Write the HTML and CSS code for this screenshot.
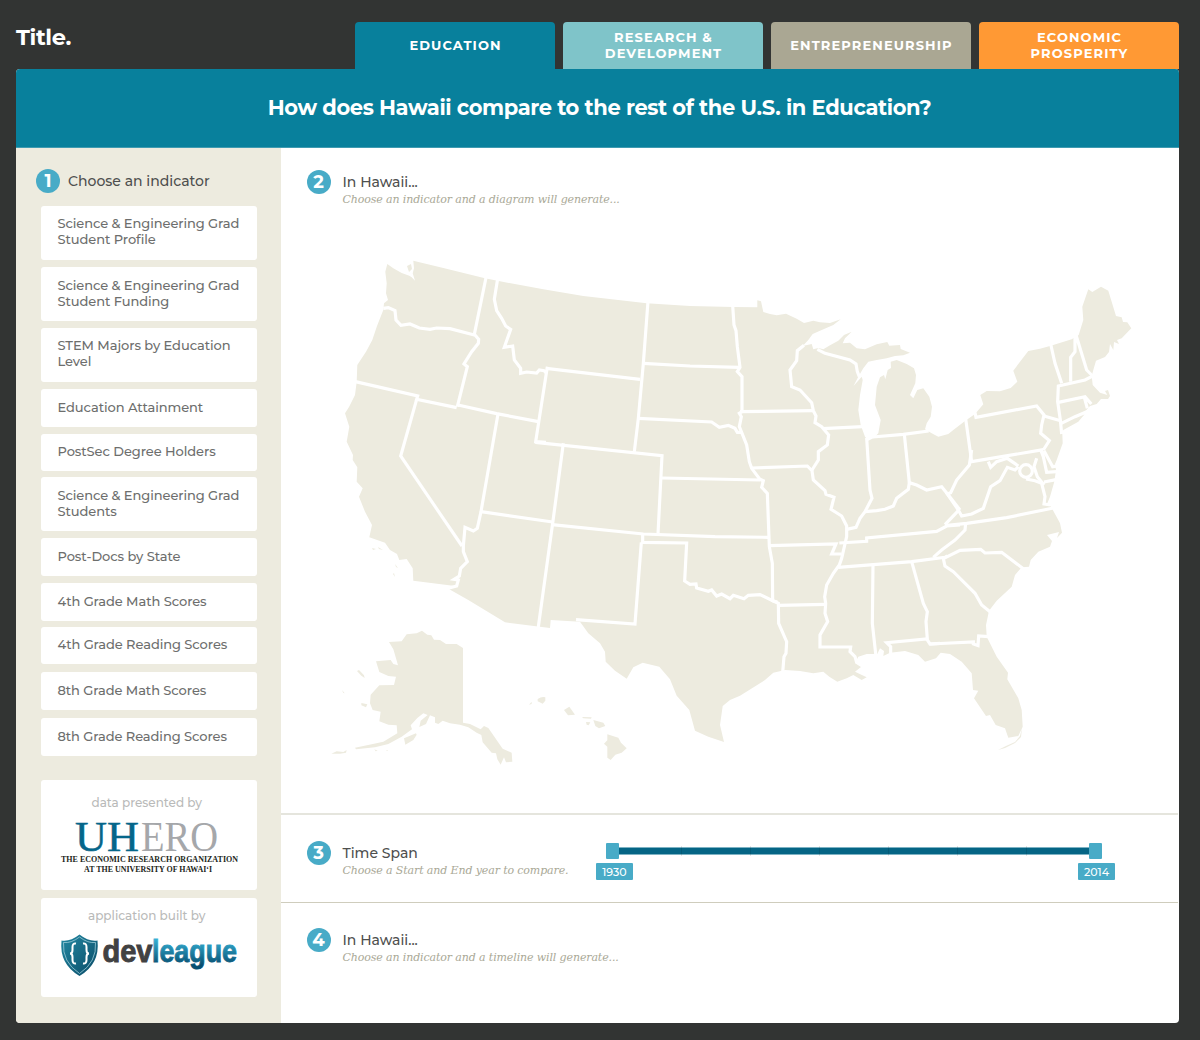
FILE: index.html
```html
<!DOCTYPE html>
<html lang="en">
<head>
<meta charset="utf-8">
<title>Title.</title>
<link rel="stylesheet" href="styles.css">
</head>
<body>
<header class="top">
  <h1 class="brand">Title.</h1>
  <nav class="tabs">
    <a class="tab tab-education">EDUCATION</a>
    <a class="tab tab-research">RESEARCH &amp;<br>DEVELOPMENT</a>
    <a class="tab tab-entre">ENTREPRENEURSHIP</a>
    <a class="tab tab-economic">ECONOMIC<br>PROSPERITY</a>
  </nav>
</header>
<main class="panel">
  <div class="question"><h2 class="question-text">How does Hawaii compare to the rest of the U.S. in Education?</h2></div>
  <div class="columns">
    <aside class="sidebar">
      <div class="step step-side"><span class="num">1</span><h3 class="step-title">Choose an indicator</h3></div>
      <ul class="indicators">
        <li class="item tall">Science &amp; Engineering Grad<br>Student Profile</li>
        <li class="item tall low">Science &amp; Engineering Grad<br>Student Funding</li>
        <li class="item tall">STEM Majors by Education<br>Level</li>
        <li class="item">Education Attainment</li>
        <li class="item short near">PostSec Degree Holders</li>
        <li class="item tall low">Science &amp; Engineering Grad<br>Students</li>
        <li class="item">Post-Docs by State</li>
        <li class="item near">4th Grade Math Scores</li>
        <li class="item short far">4th Grade Reading Scores</li>
        <li class="item far">8th Grade Math Scores</li>
        <li class="item">8th Grade Reading Scores</li>
      </ul>
      <section class="credit credit-data">
        <p class="credit-label">data presented by</p>
        <svg class="uhero" viewBox="0 0 216 64" width="216" height="64" role="img" aria-label="UHERO">
          <text class="uh" x="34" y="38.500" textLength="64" lengthAdjust="spacingAndGlyphs">UH</text>
          <text class="ero" x="100" y="38.500" textLength="77" lengthAdjust="spacingAndGlyphs">ERO</text>
          <text class="org" x="20" y="50" textLength="177" lengthAdjust="spacingAndGlyphs">THE ECONOMIC RESEARCH ORGANIZATION</text>
          <text class="org" x="43" y="60" textLength="128" lengthAdjust="spacingAndGlyphs">AT THE UNIVERSITY OF HAWAI‘I</text>
        </svg>
      </section>
      <section class="credit credit-app">
        <p class="credit-label">application built by</p>
        <svg class="devleague" viewBox="0 0 216 46" width="216" height="46" role="img" aria-label="devleague">
          <defs>
            <linearGradient id="blue" x1="0" y1="0" x2="0" y2="1"><stop offset="0.15" stop-color="#35b0d4"/><stop offset="0.9" stop-color="#064e70"/></linearGradient>
            <linearGradient id="shield" x1="0" y1="0" x2="1" y2="1"><stop offset="0" stop-color="#2389a3"/><stop offset="1" stop-color="#0a4a66"/></linearGradient>
          </defs>
          <path d="M38.500 1.500 Q48 9 56.500 7.500 Q59 31 38.500 43 Q18 31 20.500 7.500 Q29 9 38.500 1.500Z" fill="url(#shield)"/>
          <path d="M38.500 4 Q47 10.500 54.500 9.500 Q56 29 38.500 40.500 Q21 29 22.500 9.500 Q30 10.500 38.500 4Z" fill="none" stroke="#9ccbd8" stroke-width="0.8"/>
          <path d="M35 10.500 Q31.500 10 31.500 14 V17 Q31.500 20.500 29 20.500 Q31.500 20.500 31.500 24 V27 Q31.500 31 35 30.500 M42 10.500 Q45.500 10 45.500 14 V17 Q45.500 20.500 48 20.500 Q45.500 20.500 45.500 24 V27 Q45.500 31 42 30.500" fill="none" stroke="#fff" stroke-width="2"/>
          <text class="dev" x="61.500" y="29" textLength="50" lengthAdjust="spacingAndGlyphs">dev</text>
          <text class="league" x="111" y="29" textLength="85" lengthAdjust="spacingAndGlyphs">league</text>
        </svg>
      </section>
    </aside>
    <div class="content">
      <section class="map-section">
        <div class="step"><span class="num">2</span><div><h3 class="step-title hawaii">In Hawaii...</h3><p class="hint">Choose an indicator and a diagram will generate...</p></div></div>
        <svg class="map" viewBox="320 240 830 540" width="830" height="540" role="img" aria-label="Map of the United States">
          <path class="land" d="M387.300 264L393.300 268.300 401.700 273 409.300 275.700 411.700 277.300 415 280.700 412.700 273.300 414 268.300 413.300 260.700 443.300 268 485 278.300 500 281.300 543.300 289.300 583.300 296 646.700 303.300 690 306 733.300 307 757.300 307.300 757.300 300.300 761 301.300 763.300 312 770 314 776.700 315.300 786 313.700 796.700 318.700 804 323 813.300 320.700 820 322.300 830 323 840.700 319.300 833.300 325 820 330.700 812.700 334 808.300 340 802.700 346 811.700 344 813.300 349.300 818.300 348 823.300 349.300 830 345.300 838.300 340.700 844 335 851.700 331.700 845 338.300 842.700 343.300 850 342.700 856.700 348.300 865 349.300 876.700 344.300 887.300 342 889.300 345.700 900 345 900.700 349 910 352.700 903.300 355.300 895 356 886.700 358.300 876.700 360 868.300 361.700 863.300 368.300 858.300 376.700 853.500 386 861.700 376.700 862.700 380 860 395 858.300 410 860.700 425 865 436.700 868.300 440.700 873.300 438.300 878.300 433.300 880.700 420 875 405 876.700 386.700 880 377.300 884 375 885.300 379.300 887.700 370 891 368 890.700 361.700 896.700 360 906.700 364 914 368.300 916 375 915.300 383.300 910 395 913.300 398.300 917.300 390 923.300 388.300 929.300 396.700 932 406.700 930.700 416.700 926.700 423.300 925 429.300 931.700 433.300 938.300 436.700 948.300 434 953.300 430 965 421 975 414 983.300 404.300 980.300 395 986.700 391 1000 391.300 1010.700 388 1017.300 381.700 1013.300 370.700 1020 361.700 1028.300 351 1040 348.700 1050 346 1071.700 339.300 1078.700 335 1083.300 320 1082.300 306.700 1088.300 289.300 1092.300 292 1101 286.700 1108.300 290.700 1116 316 1121.700 317.300 1123 322 1127.300 322.300 1131.300 328.300 1121.700 338.300 1117 340 1119 344 1114 342 1113.300 350 1110 344 1109 352 1105 357 1096 360.700 1093.300 370 1091.700 376 1092.700 385 1100 392.700 1107.300 395 1105 391 1108 390 1110 396 1108 399 1101 399 1096.700 404 1090 406 1085.500 411 1084 415 1078.300 421.700 1063.300 430 1062.300 433.300 1062.700 443.300 1056.700 460 1055 464 1056 470 1054.300 481.700 1050 496.700 1047.300 503.300 1051 506.700 1058.300 520 1060 523.300 1062 532.700 1057 538 1059 532 1051 534 1047 535 1052 541 1050 546.700 1038.300 551.700 1030.700 560 1029 566.700 1021.700 567.300 1015 575 1011.700 586.700 996.700 600.700 989 610.700 986 625 986.700 636.700 996.700 656.700 1008 672.700 1007.300 679.300 1018.300 698.300 1021.700 710 1022.700 726.700 1018.300 736 1008.300 737.700 1005 728.300 995.700 725 990 715 986 716 974 698.300 978.300 690.700 973 690 971.700 673.300 961.700 661.700 950 654 940.700 652.700 936 658.300 925 661.700 918.300 655 905 651 890 652.700 883.300 656 884 651 880 648.300 877.300 654 866.700 654 858.300 656.700 855 663.300 861 667 855 671.700 866.700 677.300 861.700 680 853.300 675 846.700 678.300 837.300 681.700 829.300 676.700 823.300 671.700 813.300 673.300 800 671 785 670 773.300 672.700 765 680 740 695.700 730 700 722.700 706 720 725 724 742 708.300 736.700 695 730.700 689.300 710 676.700 695.700 670 679.300 659.300 666.700 642.700 662.700 633.300 667.300 626.700 678.700 615 670.700 605.700 661.700 605 651.700 600 643.300 588.300 633.300 580 621.700 550.700 620 550 628 505 622.300 468.300 600 449.300 589.300 455 586 413.300 580.700 412.700 568.300 406.700 559 399.300 560 397 554 390 550 385 542.700 369.300 537.300 372 525 365 511.700 359 496.700 362.700 488.300 356.700 481.700 357.300 467.300 352.700 460 353 455 346.700 441.700 349.300 426.700 345 413.300 349 407 355 395 356.700 381.700 357.300 365 366 351.700 372.300 340 377 326 383.300 310 384 303.300 388 300 386 293.300 386.700 283.300 385.300 271.700Z"/>
          <path class="land" d="M407 266l4-2 1 5-3 3zM372 548l4 1-3 1zM378 547l5 3-4-1zM395 564l3 4-2-1zM394 573l1 4-2-3zM998 750l8-4 9-4 5-6 2-8-1 9-6 6-10 5z"/>
          <g class="border" transform="translate(330 240) scale(.33333)">
            <path d="M160 205L175 203 195 212 198 240 213 256 240 252 268 264 300 268 320 264 360 266 433 285"/>
            <path d="M469 108L433 283 446 298 445 310 425 335 402 372 412 380 382 500"/>
            <path d="M76 425L263 468 260 478 380 503"/>
            <path d="M384 495L500 521 625 545"/>
            <path d="M260 478L212 648 396 918"/>
            <path d="M504 522L453 815 442 865 430 873 405 862 400 918 400 935 412 965 392 985 388 1008 372 1018 385 1020 380 1038 355 1045"/>
            <path d="M453 815L668 846"/>
            <path d="M503 116L493 178 500 212 515 235 527 258 542 268 523 322 548 318 553 360 572 385 572 400 590 396 620 399 628 390 642 392 650 400"/>
            <path d="M652 380L617 605 648 607"/>
            <path d="M700 610L668 850 624 1168"/>
          </g>
          <g class="border" transform="translate(530 280) scale(.33333)">
            <path d="M48 265L330 298"/>
            <path d="M354 64L340 250 325 415 313 515"/>
            <path d="M16 487L396 527 384 762"/>
            <path d="M396 594L690 600"/>
            <path d="M340 250L480 258 628 262"/>
            <path d="M325 415L545 426 568 442 595 436 615 445 622 457 636 457"/>
            <path d="M66 734L340 762 555 770 716 772"/>
            <path d="M338 762L338 787 470 789 464 903 480 913 498 912 500 924 535 934 545 930 560 948 575 942 600 956 610 946 642 956 655 946 690 944 728 962 742 966"/>
            <path d="M334 787L315 1032 138 1019"/>
            <path d="M608 76L612 135 618 152 622 200 630 262 622 275 636 290 636 395 628 400 634 410 628 440 650 495 658 545 665 565 690 598 700 602 695 622 712 640 718 800 727 850 728 962 745 970 746 1030 770 1085 768 1120 762 1130 758 1178"/>
          </g>
          <g class="border" transform="translate(730 280) scale(.33333)">
            <path d="M30 395L250 392"/>
            <path d="M222 196L202 212 200 242 180 270 185 320 210 330 245 368 250 392 258 408 255 428 275 440 296 465 292 495 265 515 265 540 246 570"/>
            <path d="M278 446L398 440"/>
            <path d="M66 564L232 558 246 572 250 600 285 632 288 643 312 652 303 688 335 708 350 738 350 770 335 835 328 855 310 880 290 915 284 950 287 970 285 1000 293 1025 270 1065 270 1101 362 1101 360 1115 375 1130 380 1148"/>
            <path d="M118 797L318 792 305 822 335 822"/>
            <path d="M146 976L287 973"/>
            <path d="M262 208L285 220 360 240 378 252 382 275 388 290"/>
            <path d="M410 474L420 630 426 655 405 695 390 715 378 742 350 748"/>
            <path d="M405 695L440 692 465 688 490 678 500 655 535 628 538 608 560 615 590 630 635 620 655 645 690 690"/>
            <path d="M428 471L520 463 596 453"/>
            <path d="M523 463L538 608"/>
            <path d="M328 789L410 784 410 774 620 754 650 738 690 735"/>
            <path d="M325 862L430 854 545 845 645 832 652 828"/>
            <path d="M429 854L427 1030 438 1130"/>
            <path d="M545 845L580 970 592 995 588 1025 592 1078"/>
            <path d="M482 1125L482 1100 470 1088 590 1077 600 1092 630 1090"/>
          </g>
          <g class="border" transform="translate(800 480) scale(.33333)">
            <path d="M435 137L500 130 620 113 760 84"/>
            <path d="M497 130L495 150 465 180 445 195 425 210 400 232"/>
            <path d="M430 236L480 211 542 208 555 219 605 217 670 266"/>
            <path d="M430 236L435 258 460 275 525 340 545 375 570 395"/>
            <path d="M390 492L520 486 520 492 534 497 536 468 566 470"/>
          </g>
          <g class="border" transform="translate(920 270) scale(.33333)">
            <path d="M137 446L155 575 370 539"/>
            <path d="M155 540L148 585 110 630 92 668 82 672 115 720 125 738 155 732 190 715 212 650 240 632 262 592 285 600 295 590"/>
            <path d="M115 722L75 764"/>
            <circle cx="318" cy="603" r="19"/>
            <path d="M205 575L212 592 230 575 262 565 295 588"/>
            <path d="M318 627L345 632 365 640 375 680 372 702 392 705"/>
            <path d="M350 565L342 590 352 620 372 645M372 636L408 629"/>
            <path d="M362 540L370 560 380 607 410 605M372 542L398 590 412 588"/>
            <path d="M370 540L388 512 362 490 365 465 372 435 350 408 168 442 165 428"/>
            <path d="M372 438L422 452"/>
            <path d="M392 222L405 280 425 340"/>
            <path d="M522 316L495 330 415 348 413 395 421 450 425 492"/>
            <path d="M465 195L465 245 452 262 452 335M468 195L500 300 518 318"/>
            <path d="M415 397L495 380 514 402M493 382L502 415M424 460L465 440 525 415"/>
          </g>
          <g class="land" transform="translate(320 600) scale(.33333)">
            <path d="M207 126L245 124 260 103 290 100 306 92 322 104 334 106 342 119 360 120 378 132 410 132 429 144 429 368 450 372 482 388 492 378 505 384 548 446 575 458 577 485 558 487 552 472 542 494 532 478 528 460 515 458 488 427 484 405 470 398 445 382 420 374 390 370 368 362 355 372 345 368 345 352 330 346 318 372 298 381 302 362 323 345 310 340 292 354 272 376 276 388 245 410 205 432 165 442 108 448 105 443 155 433 190 425 232 400 230 376 205 374 178 364 182 335 158 330 150 310 152 284 178 256 222 255 228 230 205 228 178 216 168 184 212 180 220 192 234 196 226 168 220 148Z"/>
            <path d="M252 415L288 400 290 404 280 420 256 434ZM34 461L50 454 70 456 80 450 78 458 60 461ZM111 213L117 210 132 226 134 234 124 227ZM124 309L142 313 138 322 124 316ZM66 270L74 280 70 279ZM163 448l10 4-6 2zM199 450l5 1-3 3z"/>
            <path d="M653 297Q665 289 676 292L676 302 668 311 653 304ZM627 314L635 305 635 312ZM732 330L748 320 765 344 744 346ZM786 351L815 352 813 356 790 355ZM798 366L811 367 806 376 800 374ZM820 360L850 368 856 378 837 385 826 378ZM862 403L895 413 903 428 920 445 905 458 886 464 872 480 862 473 862 440 852 431 862 421Z"/>
          </g>
        </svg>
      </section>
      <section class="span-section">
        <div class="step"><span class="num">3</span><div><h3 class="step-title hawaii">Time Span</h3><p class="hint">Choose a Start and End year to compare.</p></div></div>
        <div class="range">
          <div class="track"><i class="handle"></i><i class="tick"></i><i class="tick"></i><i class="tick"></i><i class="tick"></i><i class="tick"></i><i class="tick"></i><i class="handle"></i></div>
          <div class="years"><span class="year">1930</span><span class="year">2014</span></div>
        </div>
      </section>
      <section class="line-section">
        <div class="step"><span class="num">4</span><div><h3 class="step-title hawaii">In Hawaii...</h3><p class="hint">Choose an indicator and a timeline will generate...</p></div></div>
      </section>
    </div>
  </div>
</main>
</body>
</html>
```

FILE: styles.css
```css
* { box-sizing: border-box; }
body {
  margin: 0;
  padding: 22px 21px 17px 16px;
  height: 1040px;
  background: #323433;
  font-family: Montserrat, Inter, "Open Sans", sans-serif;
  color: #4e4f4e;
}
h1, h2, h3, p, ul { margin: 0; padding: 0; font-weight: 500; }
.top { display: flex; justify-content: space-between; height: 47px; }
.brand { color: #fff; font-size: 22.5px; line-height: 30px; font-weight: 700; letter-spacing: -.4px; }
.tabs { display: flex; gap: 8px; }
.tab {
  width: 200px; height: 47px; border-radius: 4px 4px 0 0;
  display: flex; align-items: center; justify-content: center; text-align: center;
  color: #fff; font-size: 13px; line-height: 15.5px; font-weight: 700; letter-spacing: 1.1px; padding-left: 1px;
}
.tab-education { background: #08809c; }
.tab-research { background: #7fc4c9; }
.tab-entre { background: #aaa793; }
.tab-economic { background: #ff9934; }
.panel { height: 954px; border-radius: 4px; overflow: hidden; background: #fff; }
.question {
  height: 79px; background: #08809c; border-bottom: 1px solid #3f9bb1; padding-left: 4px;
  display: flex; justify-content: center; align-items: center; color: #fff;
}
.question-text { font-size: 21px; font-weight: 700; line-height: 26px; white-space: nowrap; letter-spacing: -.38px; }
.columns { display: flex; height: 875px; }
.sidebar { width: 264.5px; background: #edebdf; padding: 21px 24px 0 25px; }
.step { display: flex; gap: 12px; align-items: flex-start; white-space: nowrap; }
.num {
  width: 24px; height: 24px; flex: none; border-radius: 50%; background: #48abc7; color: #fff;
  font-size: 18px; line-height: 24px; font-weight: 700; text-align: center;
}
.step-side { gap: 8px; margin-left: -5px; height: 37px; }
.step-title { font-size: 14px; line-height: 24px; letter-spacing: 0; }
.indicators { list-style: none; display: flex; flex-direction: column; gap: 7px; }
.item {
  height: 38px; padding: 11px 0 0 16.5px; background: #fff; border-radius: 3px;
  font-size: 13px; line-height: 15.5px; letter-spacing: -.07px; color: #6d6e6d; white-space: nowrap;
}
.tall { height: 54px; padding-top: 10px; }
.low { padding-top: 11px; }
.short { height: 37px; padding-top: 10px; }
.near { margin-bottom: -1px; }
.far { margin-bottom: 1px; }
.credit { margin-top: 24px; background: #fff; border-radius: 3px; height: 110px; text-align: center; }
.credit-app { margin-top: 8px; height: 99px; }
.credit-label { font-size: 12px; line-height: 16px; color: #b9bab9; padding: 15px 4px 0 0; }
.credit-app .credit-label { padding-top: 10px; }
.credit svg { display: block; }
.devleague { margin-top: 9px; }
.uhero { margin-top: 1px; }
.uh, .ero, .org { font-family: "Liberation Serif", serif; }
.uh, .ero { font-size: 42px; }
.uh { fill: #05668a; stroke: #05668a; stroke-width: .5; }
.ero { fill: #a5a7aa; }
.org { font-size: 8.5px; font-weight: 700; fill: #231f20; }
.dev, .league { font-family: "Liberation Sans", sans-serif; font-size: 31px; font-weight: 700; stroke-width: .9; }
.dev { fill: #414142; stroke: #414142; }
.league { fill: url(#blue); stroke: url(#blue); }
.content { flex: 1; }
.map-section { height: 667px; padding: 22px 0 0 26px; border-bottom: 2px solid #e5e5dd; margin-right: 1px; }
.step-title.hawaii { line-height: 24px; }
.hint { font-family: "DejaVu Serif", serif; font-style: italic; font-size: 11px; line-height: 14px; letter-spacing: -.12px; color: #a9a896; margin-top: -1px; }
.map { display: block; margin: 33px 0 0 13.5px; }
.land { fill: #edebdf; }
.border { fill: none; stroke: #fff; stroke-width: 9.5; }
.span-section { height: 88px; padding: 26px 0 0 26px; border-bottom: 1px solid #cfcdbd; display: flex; justify-content: space-between; margin-right: 1px; }
.range { width: 519px; margin-right: 63px; }
.track {
  height: 16px; margin: 2px 13px 0 10px; display: flex; justify-content: space-between; align-items: center;
  background: linear-gradient(#08809c00 4px, #7db2c3 4px, #7db2c3 5px, #056585 5px, #056585 11px, #7db2c3 11px, #7db2c3 12px, #08809c00 12px);
}
.handle { width: 12.5px; height: 16px; border-radius: 1px; background: #48abc7; }
.handle:first-child { margin-right: -5.75px; }
.handle:last-child { margin-left: -5.75px; }
.tick { width: 1px; height: 10px; background: #0000001a; }
.years { display: flex; justify-content: space-between; margin-top: 4px; }
.year { width: 37px; height: 17px; border-radius: 1px; background: #48abc7; color: #fff; text-align: center; font-size: 11px; line-height: 18px; font-weight: 500; }
.line-section { padding: 25px 0 0 26px; }
```
